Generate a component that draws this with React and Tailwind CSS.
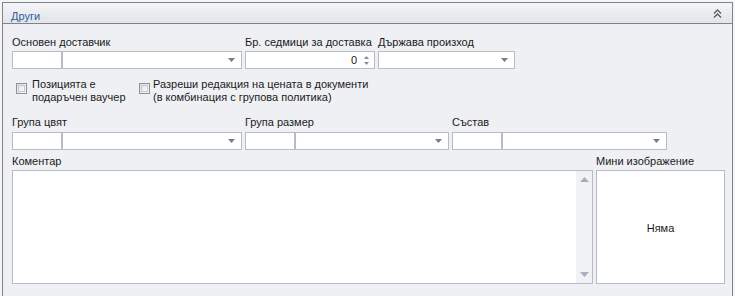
import React from "react";

const font = { fontFamily: '"Liberation Sans", Arial, sans-serif' };

const Arrow = () => (
    <svg width="7" height="4" viewBox="0 0 7 4" className="shrink-0">
        <path d="M0 0 H7 L3.5 4 Z" fill="#7a7c80" />
    </svg>
);

const Box = ({ className = "", children }) => (
    <div className={`h-[18px] border border-[#b7bbc2] bg-white flex items-center ${className}`}>{children}</div>
);

const Combo = ({ w }) => (
    <Box className={`${w} justify-end pr-[6px]`}>
        <Arrow />
    </Box>
);

const CheckBox = () => (
    <div className="w-[11px] h-[11px] border border-[#8e9299] bg-gradient-to-br from-[#dcdfe3] to-[#f7f8f9] p-[1px] shrink-0">
        <div className="w-full h-full border border-[#c6cad0] bg-gradient-to-br from-[#e2e5e9] to-[#fbfbfc]"></div>
    </div>
);

const Label = ({ children, className = "" }) => (
    <div className={`text-[11px] leading-[13px] text-[#1b1b1b] whitespace-nowrap ${className}`}>{children}</div>
);

export default function App() {
    return (
        <div className="w-[735px] h-[296px] overflow-hidden bg-[#f4f5f6] pt-[2px] pl-[2px]" style={font}>
            <div className="w-[731px] h-[310px] border border-[#80848a] bg-[#eef0f3]">
                {/* Header */}
                <div className="h-[21px] border-b border-[#80848a] bg-gradient-to-b from-[#f4f5f7] to-[#e1e4e8] flex items-start justify-between pl-[8px] pr-[10px] pt-[7px]">
                    <div className="text-[11px] leading-[13px] text-[#2d5e9c]">Други</div>
                    <svg width="9" height="9" viewBox="0 0 9 9" className="mt-[-1px]">
                        <path d="M1 4.5 L4.5 1 L8 4.5 M1 8.5 L4.5 5 L8 8.5" fill="none" stroke="#5a5d62" strokeWidth="1.4" />
                    </svg>
                </div>

                {/* Body */}
                <div className="pl-[9px] pt-[12px]">
                    {/* Row 1 */}
                    <div className="flex gap-[3px]">
                        <div className="w-[230px]">
                            <Label>Основен доставчик</Label>
                            <div className="flex mt-[2px]">
                                <Box className="w-[50px]" />
                                <Combo w="w-[180px]" />
                            </div>
                        </div>
                        <div className="w-[130px]">
                            <Label>Бр. седмици за доставка</Label>
                            <Box className="mt-[2px] w-[130px] justify-end pr-[5px]">
                                <span className="text-[11px] text-[#1b1b1b] mr-[7px]">0</span>
                                <div className="flex flex-col gap-[3px]">
                                    <svg width="5" height="3" viewBox="0 0 5 3"><path d="M0 3 H5 L2.5 0 Z" fill="#8a8c90" /></svg>
                                    <svg width="5" height="3" viewBox="0 0 5 3"><path d="M0 0 H5 L2.5 3 Z" fill="#8a8c90" /></svg>
                                </div>
                            </Box>
                        </div>
                        <div className="w-[137px]">
                            <Label>Държава произход</Label>
                            <div className="mt-[2px]">
                                <Combo w="w-[137px]" />
                            </div>
                        </div>
                    </div>

                    {/* Checkboxes */}
                    <div className="flex mt-[9px]">
                        <div className="flex items-start pl-[4px] w-[127px]">
                            <div className="mt-[5px]"><CheckBox /></div>
                            <Label className="ml-[5px]">Позицията е<br />подаръчен ваучер</Label>
                        </div>
                        <div className="flex items-start">
                            <div className="mt-[5px]"><CheckBox /></div>
                            <Label className="ml-[3px]">Разреши редакция на цената в документи<br />(в комбинация с групова политика)</Label>
                        </div>
                    </div>

                    {/* Row 2 */}
                    <div className="flex gap-[3px] mt-[12px]">
                        <div className="w-[230px]">
                            <Label>Група цвят</Label>
                            <div className="flex mt-[3px]">
                                <Box className="w-[50px]" />
                                <Combo w="w-[180px]" />
                            </div>
                        </div>
                        <div className="w-[204px]">
                            <Label>Група размер</Label>
                            <div className="flex mt-[3px]">
                                <Box className="w-[50px]" />
                                <Combo w="w-[154px]" />
                            </div>
                        </div>
                        <div className="w-[215px]">
                            <Label>Състав</Label>
                            <div className="flex mt-[3px]">
                                <Box className="w-[50px]" />
                                <Combo w="w-[165px]" />
                            </div>
                        </div>
                    </div>

                    {/* Comment + image */}
                    <div className="flex gap-[3px] mt-[5px]">
                        <div className="w-[581px]">
                            <Label>Коментар</Label>
                            <div className="mt-[2px] h-[114px] border border-[#b7bbc2] bg-white flex justify-end">
                                <div className="w-[16px] h-full bg-[#f1f2f4] flex flex-col items-center justify-between py-[6px]">
                                    <svg width="9" height="5" viewBox="0 0 9 5"><path d="M0 5 H9 L4.5 0 Z" fill="#a7afc2" /></svg>
                                    <svg width="9" height="5" viewBox="0 0 9 5"><path d="M0 0 H9 L4.5 5 Z" fill="#a7afc2" /></svg>
                                </div>
                            </div>
                        </div>
                        <div className="w-[129px]">
                            <Label>Мини изображение</Label>
                            <div className="mt-[2px] h-[114px] border border-[#b7bbc2] bg-white flex items-center justify-center">
                                <span className="text-[11px] text-[#1b1b1b] mt-[2px]">Няма</span>
                            </div>
                        </div>
                    </div>
                </div>
            </div>
        </div>
    );
}
